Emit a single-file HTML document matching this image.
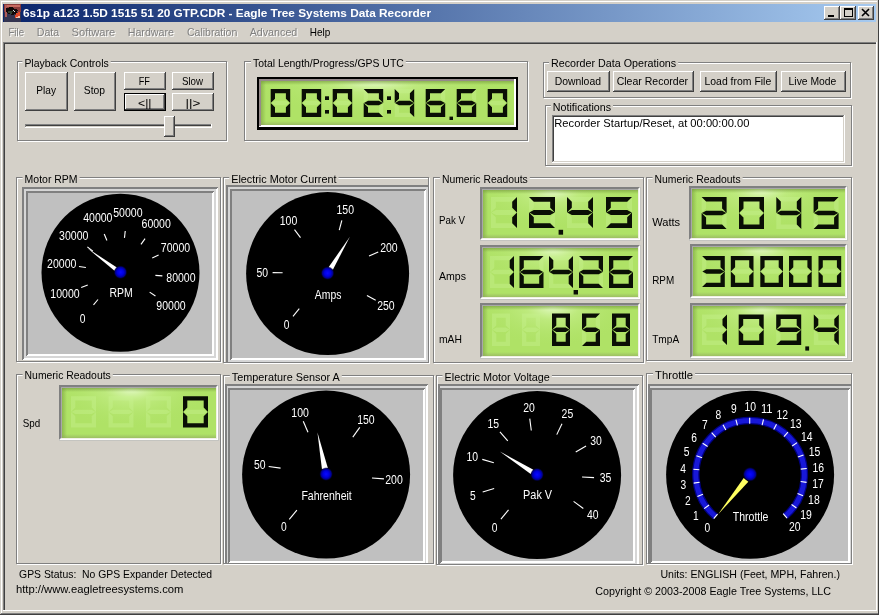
<!DOCTYPE html><html><head><meta charset="utf-8"><style>html,body{margin:0;padding:0;background:#d4d0c8;overflow:hidden}svg{display:block;will-change:transform}text{font-family:'Liberation Sans',sans-serif;white-space:pre}</style></head><body>
<svg width="879" height="615" viewBox="0 0 879 615" shape-rendering="crispEdges">
<defs><linearGradient id="title" x1="0" x2="1" y1="0" y2="0"><stop offset="0" stop-color="#0a246a"/><stop offset="1" stop-color="#a6caf0"/></linearGradient><linearGradient id="shT" x1="0" y1="0" x2="0" y2="1"><stop offset="0" stop-color="#7aa040" stop-opacity="0.7"/><stop offset="1" stop-color="#7aa040" stop-opacity="0"/></linearGradient><linearGradient id="shL" x1="0" y1="0" x2="1" y2="0"><stop offset="0" stop-color="#7aa040" stop-opacity="0.6"/><stop offset="1" stop-color="#7aa040" stop-opacity="0"/></linearGradient><linearGradient id="shB" x1="0" y1="1" x2="0" y2="0"><stop offset="0" stop-color="#90a860" stop-opacity="0.6"/><stop offset="1" stop-color="#90a860" stop-opacity="0"/></linearGradient><radialGradient id="dotglow"><stop offset="0" stop-color="#0a0aff"/><stop offset="0.45" stop-color="#0000e0"/><stop offset="0.75" stop-color="#000088"/><stop offset="1" stop-color="#000010" stop-opacity="0"/></radialGradient></defs>
<rect x="0" y="0" width="879" height="615" fill="#d4d0c8" />
<rect x="1" y="1" width="877" height="1" fill="#ffffff" />
<rect x="1" y="1" width="1" height="612" fill="#ffffff" />
<rect x="0" y="614" width="879" height="1" fill="#404040" />
<rect x="878" y="0" width="1" height="615" fill="#404040" />
<rect x="1" y="613" width="877" height="1" fill="#808080" />
<rect x="877" y="1" width="1" height="612" fill="#d4d0c8" />
<rect x="3" y="4" width="873" height="18" fill="url(#title)" />
<g shape-rendering="crispEdges">
<rect x="4" y="4" width="17" height="18" fill="#343450" />
<rect x="4" y="4" width="17" height="8" fill="#8a3a3a" />
<rect x="5" y="5" width="15" height="2" fill="#c86a60" />
<rect x="5" y="5" width="2" height="12" fill="#b05a58" />
</g>
<polygon points="6,8 12,7 15,9 18,10 17,13 13,15 8,14 6,11" fill="#120808"/>
<polygon points="8,11 13,11 12,14 8,13" fill="#304030"/>
<polygon points="13,10 15,11 14,12" fill="#e0e0e0"/>
<polygon points="16,13 20,12 20,17 15,18" fill="#e04828"/>
<polygon points="16,17 20,16 20,18 16,18" fill="#f0c0b0"/>
<text x="23" y="17" font-size="11" fill="#fff" font-weight="bold" text-anchor="start" textLength="408" lengthAdjust="spacingAndGlyphs" >6s1p a123 1.5D 1515 51 20 GTP.CDR - Eagle Tree Systems Data Recorder</text>
<rect x="824" y="6" width="16" height="14" fill="#404040" />
<rect x="824" y="6" width="15" height="13" fill="#ffffff" />
<rect x="825" y="7" width="14" height="12" fill="#808080" />
<rect x="825" y="7" width="13" height="11" fill="#d4d0c8" />
<rect x="840" y="6" width="16" height="14" fill="#404040" />
<rect x="840" y="6" width="15" height="13" fill="#ffffff" />
<rect x="841" y="7" width="14" height="12" fill="#808080" />
<rect x="841" y="7" width="13" height="11" fill="#d4d0c8" />
<rect x="858" y="6" width="16" height="14" fill="#404040" />
<rect x="858" y="6" width="15" height="13" fill="#ffffff" />
<rect x="859" y="7" width="14" height="12" fill="#808080" />
<rect x="859" y="7" width="13" height="11" fill="#d4d0c8" />
<rect x="828" y="15" width="6" height="2" fill="#000" />
<rect x="844" y="8" width="9" height="9" fill="#000" />
<rect x="845" y="10" width="7" height="6" fill="#d4d0c8" />
<path d="M862,9 L869,16 M869,9 L862,16" stroke="#000" stroke-width="1.6" shape-rendering="auto"/>
<g shape-rendering="auto">
<text x="9.5" y="37" font-size="11" fill="#fff" font-weight="normal" text-anchor="start" textLength="15.5" lengthAdjust="spacingAndGlyphs" >File</text>
<text x="8.5" y="36" font-size="11" fill="#808080" font-weight="normal" text-anchor="start" textLength="15.5" lengthAdjust="spacingAndGlyphs" >File</text>
<text x="37.8" y="37" font-size="11" fill="#fff" font-weight="normal" text-anchor="start" textLength="22.4" lengthAdjust="spacingAndGlyphs" >Data</text>
<text x="36.8" y="36" font-size="11" fill="#808080" font-weight="normal" text-anchor="start" textLength="22.4" lengthAdjust="spacingAndGlyphs" >Data</text>
<text x="72.6" y="37" font-size="11" fill="#fff" font-weight="normal" text-anchor="start" textLength="43.7" lengthAdjust="spacingAndGlyphs" >Software</text>
<text x="71.6" y="36" font-size="11" fill="#808080" font-weight="normal" text-anchor="start" textLength="43.7" lengthAdjust="spacingAndGlyphs" >Software</text>
<text x="128.7" y="37" font-size="11" fill="#fff" font-weight="normal" text-anchor="start" textLength="46.3" lengthAdjust="spacingAndGlyphs" >Hardware</text>
<text x="127.7" y="36" font-size="11" fill="#808080" font-weight="normal" text-anchor="start" textLength="46.3" lengthAdjust="spacingAndGlyphs" >Hardware</text>
<text x="188" y="37" font-size="11" fill="#fff" font-weight="normal" text-anchor="start" textLength="50.3" lengthAdjust="spacingAndGlyphs" >Calibration</text>
<text x="187" y="36" font-size="11" fill="#808080" font-weight="normal" text-anchor="start" textLength="50.3" lengthAdjust="spacingAndGlyphs" >Calibration</text>
<text x="250.7" y="37" font-size="11" fill="#fff" font-weight="normal" text-anchor="start" textLength="47.6" lengthAdjust="spacingAndGlyphs" >Advanced</text>
<text x="249.7" y="36" font-size="11" fill="#808080" font-weight="normal" text-anchor="start" textLength="47.6" lengthAdjust="spacingAndGlyphs" >Advanced</text>
<text x="309.7" y="36" font-size="11" fill="#000" font-weight="normal" text-anchor="start" textLength="20.5" lengthAdjust="spacingAndGlyphs" >Help</text>
</g>
<rect x="3" y="42" width="873" height="1" fill="#808080" />
<rect x="3" y="42" width="1" height="569" fill="#808080" />
<rect x="4" y="43" width="872" height="1" fill="#404040" />
<rect x="4" y="43" width="1" height="567" fill="#404040" />
<rect x="3" y="610" width="874" height="1" fill="#ffffff" />
<rect x="876" y="42" width="1" height="569" fill="#ffffff" />
<g shape-rendering="auto">
<rect x="18" y="62" width="210" height="1" fill="#ffffff" />
<rect x="18" y="62" width="1" height="80" fill="#ffffff" />
<rect x="227" y="62" width="1" height="80" fill="#ffffff" />
<rect x="18" y="141" width="210" height="1" fill="#ffffff" />
<rect x="17" y="61" width="210" height="1" fill="#808080" />
<rect x="17" y="61" width="1" height="80" fill="#808080" />
<rect x="226" y="61" width="1" height="80" fill="#808080" />
<rect x="17" y="140" width="210" height="1" fill="#808080" />
<rect x="22.4" y="57" width="88.3" height="7" fill="#d4d0c8" />
<text x="24.4" y="67" font-size="11" fill="#000" font-weight="normal" text-anchor="start" textLength="84.3" lengthAdjust="spacingAndGlyphs" >Playback Controls</text>
<g shape-rendering="crispEdges">
<rect x="25" y="72" width="43" height="39" fill="#404040" />
<rect x="25" y="72" width="42" height="38" fill="#ffffff" />
<rect x="26" y="73" width="41" height="37" fill="#808080" />
<rect x="26" y="73" width="40" height="36" fill="#d4d0c8" />
<rect x="74" y="72" width="42" height="39" fill="#404040" />
<rect x="74" y="72" width="41" height="38" fill="#ffffff" />
<rect x="75" y="73" width="40" height="37" fill="#808080" />
<rect x="75" y="73" width="39" height="36" fill="#d4d0c8" />
<rect x="124" y="72" width="42" height="18" fill="#404040" />
<rect x="124" y="72" width="41" height="17" fill="#ffffff" />
<rect x="125" y="73" width="40" height="16" fill="#808080" />
<rect x="125" y="73" width="39" height="15" fill="#d4d0c8" />
<rect x="172" y="72" width="42" height="18" fill="#404040" />
<rect x="172" y="72" width="41" height="17" fill="#ffffff" />
<rect x="173" y="73" width="40" height="16" fill="#808080" />
<rect x="173" y="73" width="39" height="15" fill="#d4d0c8" />
<rect x="124" y="93" width="42" height="18" fill="#000" />
<rect x="125" y="94" width="40" height="16" fill="#404040" />
<rect x="125" y="94" width="39" height="15" fill="#ffffff" />
<rect x="126" y="95" width="38" height="14" fill="#808080" />
<rect x="126" y="95" width="37" height="13" fill="#d4d0c8" />
<rect x="172" y="93" width="42" height="18" fill="#404040" />
<rect x="172" y="93" width="41" height="17" fill="#ffffff" />
<rect x="173" y="94" width="40" height="16" fill="#808080" />
<rect x="173" y="94" width="39" height="15" fill="#d4d0c8" />
<rect x="25" y="124" width="187" height="4" fill="#ffffff" />
<rect x="25" y="124" width="186" height="3" fill="#808080" />
<rect x="26" y="125" width="185" height="2" fill="#404040" />
<rect x="26" y="126" width="185" height="1" fill="#d4d0c8" />
<rect x="164" y="116" width="11" height="21" fill="#404040" />
<rect x="164" y="116" width="10" height="20" fill="#ffffff" />
<rect x="165" y="117" width="9" height="19" fill="#808080" />
<rect x="165" y="117" width="8" height="18" fill="#d4d0c8" />
</g>
<text x="36.25" y="94.4" font-size="11" fill="#000" font-weight="normal" text-anchor="start" textLength="19.75" lengthAdjust="spacingAndGlyphs" >Play</text>
<text x="83.75" y="94.4" font-size="11" fill="#000" font-weight="normal" text-anchor="start" textLength="21.25" lengthAdjust="spacingAndGlyphs" >Stop</text>
<text x="138.75" y="85" font-size="11" fill="#000" font-weight="normal" text-anchor="start" textLength="11.25" lengthAdjust="spacingAndGlyphs" >FF</text>
<text x="181.9" y="85" font-size="11" fill="#000" font-weight="normal" text-anchor="start" textLength="21.1" lengthAdjust="spacingAndGlyphs" >Slow</text>
<text x="138" y="107" font-size="11" fill="#000" font-weight="normal" text-anchor="start" textLength="13.5" lengthAdjust="spacingAndGlyphs" >&lt;||</text>
<text x="185.6" y="107" font-size="11" fill="#000" font-weight="normal" text-anchor="start" textLength="14.8" lengthAdjust="spacingAndGlyphs" >||&gt;</text>
<rect x="245" y="62" width="284" height="1" fill="#ffffff" />
<rect x="245" y="62" width="1" height="80" fill="#ffffff" />
<rect x="528" y="62" width="1" height="80" fill="#ffffff" />
<rect x="245" y="141" width="284" height="1" fill="#ffffff" />
<rect x="244" y="61" width="284" height="1" fill="#808080" />
<rect x="244" y="61" width="1" height="80" fill="#808080" />
<rect x="527" y="61" width="1" height="80" fill="#808080" />
<rect x="244" y="140" width="284" height="1" fill="#808080" />
<rect x="251" y="57" width="154.8" height="7" fill="#d4d0c8" />
<text x="253" y="67" font-size="11" fill="#000" font-weight="normal" text-anchor="start" textLength="150.8" lengthAdjust="spacingAndGlyphs" >Total Length/Progress/GPS UTC</text>
<g shape-rendering="crispEdges">
<rect x="257" y="77" width="261" height="53" fill="#000" />
<rect x="259" y="79" width="257" height="48" fill="#ffffff" />
<rect x="259" y="79" width="255" height="2" fill="#958a8a" />
<rect x="259" y="79" width="2" height="47" fill="#958a8a" />
<defs><radialGradient id="g1" cx="0.45" cy="0" r="0.5" fx="0.45" fy="0" gradientTransform="translate(0.45 0) scale(1 1.6) translate(-0.45 0)"><stop offset="0" stop-color="#f0ffe0" stop-opacity="0.85"/><stop offset="0.35" stop-color="#d8f8a8" stop-opacity="0.35"/><stop offset="1" stop-color="#b0e468" stop-opacity="0"/></radialGradient></defs>
<rect x="261" y="81" width="253" height="44" fill="#afe266" />
<rect x="261" y="81" width="253" height="44" fill="url(#g1)" />
<rect x="261" y="81" width="253" height="4" fill="url(#shT)" />
<rect x="261" y="81" width="5" height="44" fill="url(#shL)" />
<rect x="261" y="121" width="253" height="4" fill="url(#shB)" />
</g>
<path d="M271.00,103.00 L275.00,100.85 L285.90,100.85 L289.90,103.00 L285.90,105.15 L275.00,105.15Z" fill="#c8f290" fill-opacity="0.4"/>
<path d="M270.70,89.00 L290.20,89.00 L285.90,93.30 L275.00,93.30Z M270.70,117.00 L290.20,117.00 L285.90,112.70 L275.00,112.70Z M270.70,89.00 L275.00,93.30 L275.00,98.70 L270.70,103.00Z M270.70,117.00 L275.00,112.70 L275.00,107.30 L270.70,103.00Z M290.20,89.00 L285.90,93.30 L285.90,98.70 L290.20,103.00Z M290.20,117.00 L285.90,112.70 L285.90,107.30 L290.20,103.00Z" fill="#0a0f05"/>
<path d="M302.00,103.00 L306.00,100.85 L316.90,100.85 L320.90,103.00 L316.90,105.15 L306.00,105.15Z" fill="#c8f290" fill-opacity="0.4"/>
<path d="M301.70,89.00 L321.20,89.00 L316.90,93.30 L306.00,93.30Z M301.70,117.00 L321.20,117.00 L316.90,112.70 L306.00,112.70Z M301.70,89.00 L306.00,93.30 L306.00,98.70 L301.70,103.00Z M301.70,117.00 L306.00,112.70 L306.00,107.30 L301.70,103.00Z M321.20,89.00 L316.90,93.30 L316.90,98.70 L321.20,103.00Z M321.20,117.00 L316.90,112.70 L316.90,107.30 L321.20,103.00Z" fill="#0a0f05"/>
<path d="M333.00,103.00 L337.00,100.85 L347.90,100.85 L351.90,103.00 L347.90,105.15 L337.00,105.15Z" fill="#c8f290" fill-opacity="0.4"/>
<path d="M332.70,89.00 L352.20,89.00 L347.90,93.30 L337.00,93.30Z M332.70,117.00 L352.20,117.00 L347.90,112.70 L337.00,112.70Z M332.70,89.00 L337.00,93.30 L337.00,98.70 L332.70,103.00Z M332.70,117.00 L337.00,112.70 L337.00,107.30 L332.70,103.00Z M352.20,89.00 L347.90,93.30 L347.90,98.70 L352.20,103.00Z M352.20,117.00 L347.90,112.70 L347.90,107.30 L352.20,103.00Z" fill="#0a0f05"/>
<path d="M363.70,89.00 L368.00,93.30 L368.00,98.70 L363.70,103.00Z M383.20,117.00 L378.90,112.70 L378.90,107.30 L383.20,103.00Z" fill="#c8f290" fill-opacity="0.4"/>
<path d="M363.70,89.00 L383.20,89.00 L378.90,93.30 L368.00,93.30Z M363.70,117.00 L383.20,117.00 L378.90,112.70 L368.00,112.70Z M363.70,117.00 L368.00,112.70 L368.00,107.30 L363.70,103.00Z M383.20,89.00 L378.90,93.30 L378.90,98.70 L383.20,103.00Z M364.00,103.00 L368.00,100.85 L378.90,100.85 L382.90,103.00 L378.90,105.15 L368.00,105.15Z" fill="#0a0f05"/>
<path d="M394.70,89.00 L414.20,89.00 L409.90,93.30 L399.00,93.30Z M394.70,117.00 L414.20,117.00 L409.90,112.70 L399.00,112.70Z M394.70,117.00 L399.00,112.70 L399.00,107.30 L394.70,103.00Z" fill="#c8f290" fill-opacity="0.4"/>
<path d="M394.70,89.00 L399.00,93.30 L399.00,98.70 L394.70,103.00Z M414.20,89.00 L409.90,93.30 L409.90,98.70 L414.20,103.00Z M414.20,117.00 L409.90,112.70 L409.90,107.30 L414.20,103.00Z M395.00,103.00 L399.00,100.85 L409.90,100.85 L413.90,103.00 L409.90,105.15 L399.00,105.15Z" fill="#0a0f05"/>
<path d="M445.20,89.00 L440.90,93.30 L440.90,98.70 L445.20,103.00Z" fill="#c8f290" fill-opacity="0.4"/>
<path d="M425.70,89.00 L445.20,89.00 L440.90,93.30 L430.00,93.30Z M425.70,117.00 L445.20,117.00 L440.90,112.70 L430.00,112.70Z M425.70,89.00 L430.00,93.30 L430.00,98.70 L425.70,103.00Z M425.70,117.00 L430.00,112.70 L430.00,107.30 L425.70,103.00Z M445.20,117.00 L440.90,112.70 L440.90,107.30 L445.20,103.00Z M426.00,103.00 L430.00,100.85 L440.90,100.85 L444.90,103.00 L440.90,105.15 L430.00,105.15Z" fill="#0a0f05"/>
<path d="M476.20,89.00 L471.90,93.30 L471.90,98.70 L476.20,103.00Z" fill="#c8f290" fill-opacity="0.4"/>
<path d="M456.70,89.00 L476.20,89.00 L471.90,93.30 L461.00,93.30Z M456.70,117.00 L476.20,117.00 L471.90,112.70 L461.00,112.70Z M456.70,89.00 L461.00,93.30 L461.00,98.70 L456.70,103.00Z M456.70,117.00 L461.00,112.70 L461.00,107.30 L456.70,103.00Z M476.20,117.00 L471.90,112.70 L471.90,107.30 L476.20,103.00Z M457.00,103.00 L461.00,100.85 L471.90,100.85 L475.90,103.00 L471.90,105.15 L461.00,105.15Z" fill="#0a0f05"/>
<path d="M488.00,103.00 L492.00,100.85 L502.90,100.85 L506.90,103.00 L502.90,105.15 L492.00,105.15Z" fill="#c8f290" fill-opacity="0.4"/>
<path d="M487.70,89.00 L507.20,89.00 L502.90,93.30 L492.00,93.30Z M487.70,117.00 L507.20,117.00 L502.90,112.70 L492.00,112.70Z M487.70,89.00 L492.00,93.30 L492.00,98.70 L487.70,103.00Z M487.70,117.00 L492.00,112.70 L492.00,107.30 L487.70,103.00Z M507.20,89.00 L502.90,93.30 L502.90,98.70 L507.20,103.00Z M507.20,117.00 L502.90,112.70 L502.90,107.30 L507.20,103.00Z" fill="#0a0f05"/>
<rect x="325" y="96.3" width="4" height="3.7" fill="#0a0f05" />
<rect x="325" y="110" width="4" height="3.6" fill="#0a0f05" />
<rect x="387" y="96.3" width="4" height="3.7" fill="#0a0f05" />
<rect x="387" y="110" width="4" height="3.6" fill="#0a0f05" />
<rect x="449.5" y="116.6" width="3.5" height="3.4" fill="#0a0f05" />
<rect x="544" y="63" width="308" height="1" fill="#ffffff" />
<rect x="544" y="63" width="1" height="36" fill="#ffffff" />
<rect x="851" y="63" width="1" height="36" fill="#ffffff" />
<rect x="544" y="98" width="308" height="1" fill="#ffffff" />
<rect x="543" y="62" width="308" height="1" fill="#808080" />
<rect x="543" y="62" width="1" height="36" fill="#808080" />
<rect x="850" y="62" width="1" height="36" fill="#808080" />
<rect x="543" y="97" width="308" height="1" fill="#808080" />
<rect x="549" y="58" width="129.2" height="7" fill="#d4d0c8" />
<text x="551" y="66.6" font-size="11" fill="#000" font-weight="normal" text-anchor="start" textLength="125.2" lengthAdjust="spacingAndGlyphs" >Recorder Data Operations</text>
<g shape-rendering="crispEdges">
<rect x="547" y="71" width="63" height="21" fill="#404040" />
<rect x="547" y="71" width="62" height="20" fill="#ffffff" />
<rect x="548" y="72" width="61" height="19" fill="#808080" />
<rect x="548" y="72" width="60" height="18" fill="#d4d0c8" />
<rect x="613" y="71" width="81" height="21" fill="#404040" />
<rect x="613" y="71" width="80" height="20" fill="#ffffff" />
<rect x="614" y="72" width="79" height="19" fill="#808080" />
<rect x="614" y="72" width="78" height="18" fill="#d4d0c8" />
<rect x="700" y="71" width="77" height="21" fill="#404040" />
<rect x="700" y="71" width="76" height="20" fill="#ffffff" />
<rect x="701" y="72" width="75" height="19" fill="#808080" />
<rect x="701" y="72" width="74" height="18" fill="#d4d0c8" />
<rect x="781" y="71" width="65" height="21" fill="#404040" />
<rect x="781" y="71" width="64" height="20" fill="#ffffff" />
<rect x="782" y="72" width="63" height="19" fill="#808080" />
<rect x="782" y="72" width="62" height="18" fill="#d4d0c8" />
</g>
<text x="554.7" y="85" font-size="11" fill="#000" font-weight="normal" text-anchor="start" textLength="46.3" lengthAdjust="spacingAndGlyphs" >Download</text>
<text x="616.7" y="85" font-size="11" fill="#000" font-weight="normal" text-anchor="start" textLength="71.3" lengthAdjust="spacingAndGlyphs" >Clear Recorder</text>
<text x="704.5" y="85" font-size="11" fill="#000" font-weight="normal" text-anchor="start" textLength="66.7" lengthAdjust="spacingAndGlyphs" >Load from File</text>
<text x="788.6" y="85" font-size="11" fill="#000" font-weight="normal" text-anchor="start" textLength="47.8" lengthAdjust="spacingAndGlyphs" >Live Mode</text>
<rect x="546" y="106" width="307" height="1" fill="#ffffff" />
<rect x="546" y="106" width="1" height="61" fill="#ffffff" />
<rect x="852" y="106" width="1" height="61" fill="#ffffff" />
<rect x="546" y="166" width="307" height="1" fill="#ffffff" />
<rect x="545" y="105" width="307" height="1" fill="#808080" />
<rect x="545" y="105" width="1" height="61" fill="#808080" />
<rect x="851" y="105" width="1" height="61" fill="#808080" />
<rect x="545" y="165" width="307" height="1" fill="#808080" />
<rect x="550.8" y="101" width="62.2" height="7" fill="#d4d0c8" />
<text x="552.8" y="110.6" font-size="11" fill="#000" font-weight="normal" text-anchor="start" textLength="58.2" lengthAdjust="spacingAndGlyphs" >Notifications</text>
<g shape-rendering="crispEdges">
<rect x="552" y="115" width="293" height="48" fill="#ffffff" />
<rect x="552" y="115" width="292" height="47" fill="#808080" />
<rect x="553" y="116" width="291" height="46" fill="#d4d0c8" />
<rect x="553" y="116" width="290" height="45" fill="#404040" />
<rect x="554" y="117" width="289" height="44" fill="#ffffff" />
</g>
<text x="554.3" y="126.5" font-size="11" fill="#000" font-weight="normal" text-anchor="start" textLength="195.1" lengthAdjust="spacingAndGlyphs" >Recorder Startup/Reset, at 00:00:00.00</text>
<rect x="17" y="178" width="205" height="1" fill="#ffffff" />
<rect x="17" y="178" width="1" height="185" fill="#ffffff" />
<rect x="221" y="178" width="1" height="185" fill="#ffffff" />
<rect x="17" y="362" width="205" height="1" fill="#ffffff" />
<rect x="16" y="177" width="205" height="1" fill="#808080" />
<rect x="16" y="177" width="1" height="185" fill="#808080" />
<rect x="220" y="177" width="1" height="185" fill="#808080" />
<rect x="16" y="361" width="205" height="1" fill="#808080" />
<rect x="22.6" y="173" width="57" height="7" fill="#d4d0c8" />
<text x="24.6" y="182.7" font-size="11" fill="#000" font-weight="normal" text-anchor="start" textLength="53" lengthAdjust="spacingAndGlyphs" >Motor RPM</text>
<rect x="224" y="178" width="206" height="1" fill="#ffffff" />
<rect x="224" y="178" width="1" height="186" fill="#ffffff" />
<rect x="429" y="178" width="1" height="186" fill="#ffffff" />
<rect x="224" y="363" width="206" height="1" fill="#ffffff" />
<rect x="223" y="177" width="206" height="1" fill="#808080" />
<rect x="223" y="177" width="1" height="186" fill="#808080" />
<rect x="428" y="177" width="1" height="186" fill="#808080" />
<rect x="223" y="362" width="206" height="1" fill="#808080" />
<rect x="229.2" y="173" width="109.3" height="7" fill="#d4d0c8" />
<text x="231.2" y="182.7" font-size="11" fill="#000" font-weight="normal" text-anchor="start" textLength="105.3" lengthAdjust="spacingAndGlyphs" >Electric Motor Current</text>
<rect x="434" y="178" width="211" height="1" fill="#ffffff" />
<rect x="434" y="178" width="1" height="186" fill="#ffffff" />
<rect x="644" y="178" width="1" height="186" fill="#ffffff" />
<rect x="434" y="363" width="211" height="1" fill="#ffffff" />
<rect x="433" y="177" width="211" height="1" fill="#808080" />
<rect x="433" y="177" width="1" height="186" fill="#808080" />
<rect x="643" y="177" width="1" height="186" fill="#808080" />
<rect x="433" y="362" width="211" height="1" fill="#808080" />
<rect x="439.9" y="173" width="89.9" height="7" fill="#d4d0c8" />
<text x="441.9" y="182.7" font-size="11" fill="#000" font-weight="normal" text-anchor="start" textLength="85.9" lengthAdjust="spacingAndGlyphs" >Numeric Readouts</text>
<rect x="647" y="178" width="206" height="1" fill="#ffffff" />
<rect x="647" y="178" width="1" height="184" fill="#ffffff" />
<rect x="852" y="178" width="1" height="184" fill="#ffffff" />
<rect x="647" y="361" width="206" height="1" fill="#ffffff" />
<rect x="646" y="177" width="206" height="1" fill="#808080" />
<rect x="646" y="177" width="1" height="184" fill="#808080" />
<rect x="851" y="177" width="1" height="184" fill="#808080" />
<rect x="646" y="360" width="206" height="1" fill="#808080" />
<rect x="652.6" y="173" width="90" height="7" fill="#d4d0c8" />
<text x="654.6" y="182.7" font-size="11" fill="#000" font-weight="normal" text-anchor="start" textLength="86" lengthAdjust="spacingAndGlyphs" >Numeric Readouts</text>
<rect x="17" y="375" width="205" height="1" fill="#ffffff" />
<rect x="17" y="375" width="1" height="190" fill="#ffffff" />
<rect x="221" y="375" width="1" height="190" fill="#ffffff" />
<rect x="17" y="564" width="205" height="1" fill="#ffffff" />
<rect x="16" y="374" width="205" height="1" fill="#808080" />
<rect x="16" y="374" width="1" height="190" fill="#808080" />
<rect x="220" y="374" width="1" height="190" fill="#808080" />
<rect x="16" y="563" width="205" height="1" fill="#808080" />
<rect x="22.6" y="370" width="90.2" height="7" fill="#d4d0c8" />
<text x="24.6" y="378.8" font-size="11" fill="#000" font-weight="normal" text-anchor="start" textLength="86.2" lengthAdjust="spacingAndGlyphs" >Numeric Readouts</text>
<rect x="224" y="376" width="211" height="1" fill="#ffffff" />
<rect x="224" y="376" width="1" height="189" fill="#ffffff" />
<rect x="434" y="376" width="1" height="189" fill="#ffffff" />
<rect x="224" y="564" width="211" height="1" fill="#ffffff" />
<rect x="223" y="375" width="211" height="1" fill="#808080" />
<rect x="223" y="375" width="1" height="189" fill="#808080" />
<rect x="433" y="375" width="1" height="189" fill="#808080" />
<rect x="223" y="563" width="211" height="1" fill="#808080" />
<rect x="229.8" y="371" width="112" height="7" fill="#d4d0c8" />
<text x="231.8" y="380.7" font-size="11" fill="#000" font-weight="normal" text-anchor="start" textLength="108" lengthAdjust="spacingAndGlyphs" >Temperature Sensor A</text>
<rect x="437" y="376" width="207" height="1" fill="#ffffff" />
<rect x="437" y="376" width="1" height="190" fill="#ffffff" />
<rect x="643" y="376" width="1" height="190" fill="#ffffff" />
<rect x="437" y="565" width="207" height="1" fill="#ffffff" />
<rect x="436" y="375" width="207" height="1" fill="#808080" />
<rect x="436" y="375" width="1" height="190" fill="#808080" />
<rect x="642" y="375" width="1" height="190" fill="#808080" />
<rect x="436" y="564" width="207" height="1" fill="#808080" />
<rect x="442.5" y="371" width="109.4" height="7" fill="#d4d0c8" />
<text x="444.5" y="380.7" font-size="11" fill="#000" font-weight="normal" text-anchor="start" textLength="105.4" lengthAdjust="spacingAndGlyphs" >Electric Motor Voltage</text>
<rect x="647" y="374" width="206" height="1" fill="#ffffff" />
<rect x="647" y="374" width="1" height="191" fill="#ffffff" />
<rect x="852" y="374" width="1" height="191" fill="#ffffff" />
<rect x="647" y="564" width="206" height="1" fill="#ffffff" />
<rect x="646" y="373" width="206" height="1" fill="#808080" />
<rect x="646" y="373" width="1" height="191" fill="#808080" />
<rect x="851" y="373" width="1" height="191" fill="#808080" />
<rect x="646" y="563" width="206" height="1" fill="#808080" />
<rect x="653.1" y="369" width="42" height="7" fill="#d4d0c8" />
<text x="655.1" y="378.9" font-size="11" fill="#000" font-weight="normal" text-anchor="start" textLength="38" lengthAdjust="spacingAndGlyphs" >Throttle</text>
<g shape-rendering="crispEdges">
<clipPath id="cf1"><rect x="17" y="178" width="203" height="183"/></clipPath>
<g clip-path="url(#cf1)">
<rect x="22" y="187" width="196" height="173" fill="#ffffff" />
<polygon points="22,187 218,187 216,189 24,189 24,358 22,360" fill="#808080"/>
<rect x="24" y="189" width="192" height="169" fill="#d6d6d6" />
<rect x="26" y="191" width="188" height="165" fill="#ffffff" />
<polygon points="26,191 214,191 212,193 28,193 28,354 26,356" fill="#808080"/>
<rect x="28" y="193" width="184" height="161" fill="#c0c0c0" />
</g>
<clipPath id="cf2"><rect x="224" y="178" width="204" height="184"/></clipPath>
<g clip-path="url(#cf2)">
<rect x="226" y="185" width="204" height="179" fill="#ffffff" />
<polygon points="226,185 430,185 428,187 228,187 228,362 226,364" fill="#808080"/>
<rect x="228" y="187" width="200" height="175" fill="#d6d6d6" />
<rect x="230" y="189" width="196" height="171" fill="#ffffff" />
<polygon points="230,189 426,189 424,191 232,191 232,358 230,360" fill="#808080"/>
<rect x="232" y="191" width="192" height="167" fill="#c0c0c0" />
</g>
<clipPath id="cf3"><rect x="224" y="376" width="209" height="187"/></clipPath>
<g clip-path="url(#cf3)">
<rect x="225" y="384" width="203" height="183" fill="#ffffff" />
<polygon points="225,384 428,384 426,386 227,386 227,565 225,567" fill="#808080"/>
<rect x="227" y="386" width="199" height="179" fill="#d6d6d6" />
<rect x="228" y="388" width="197" height="175" fill="#ffffff" />
<polygon points="228,388 425,388 423,390 230,390 230,561 228,563" fill="#808080"/>
<rect x="230" y="390" width="193" height="171" fill="#c0c0c0" />
</g>
<clipPath id="cf4"><rect x="437" y="376" width="205" height="188"/></clipPath>
<g clip-path="url(#cf4)">
<rect x="438" y="384" width="201" height="183" fill="#ffffff" />
<polygon points="438,384 639,384 637,386 440,386 440,565 438,567" fill="#808080"/>
<rect x="440" y="386" width="197" height="179" fill="#d6d6d6" />
<rect x="440" y="388" width="195" height="175" fill="#ffffff" />
<polygon points="440,388 635,388 633,390 442,390 442,561 440,563" fill="#808080"/>
<rect x="442" y="390" width="191" height="171" fill="#c0c0c0" />
</g>
<clipPath id="cf5"><rect x="647" y="374" width="204" height="189"/></clipPath>
<g clip-path="url(#cf5)">
<rect x="648" y="384" width="206" height="183" fill="#ffffff" />
<polygon points="648,384 854,384 852,386 650,386 650,565 648,567" fill="#808080"/>
<rect x="650" y="386" width="202" height="179" fill="#d6d6d6" />
<rect x="650" y="388" width="200" height="175" fill="#ffffff" />
<polygon points="650,388 850,388 848,390 652,390 652,561 650,563" fill="#808080"/>
<rect x="652" y="390" width="196" height="171" fill="#c0c0c0" />
</g>
</g>
<circle cx="120.5" cy="272.7" r="79" fill="#000"/>
<line x1="98.00" y1="299.51" x2="93.50" y2="304.87" stroke="#fff" stroke-width="1.1"/>
<line x1="87.76" y1="285.07" x2="81.21" y2="287.55" stroke="#fff" stroke-width="1.1"/>
<line x1="85.89" y1="267.47" x2="78.97" y2="266.42" stroke="#fff" stroke-width="1.1"/>
<line x1="92.88" y1="251.20" x2="87.36" y2="246.90" stroke="#fff" stroke-width="1.1"/>
<line x1="106.94" y1="240.43" x2="104.22" y2="233.98" stroke="#fff" stroke-width="1.1"/>
<line x1="124.46" y1="237.92" x2="125.25" y2="230.97" stroke="#fff" stroke-width="1.1"/>
<line x1="140.97" y1="244.31" x2="145.07" y2="238.64" stroke="#fff" stroke-width="1.1"/>
<line x1="152.25" y1="257.96" x2="158.60" y2="255.02" stroke="#fff" stroke-width="1.1"/>
<line x1="155.40" y1="275.39" x2="162.38" y2="275.92" stroke="#fff" stroke-width="1.1"/>
<line x1="149.62" y1="292.12" x2="155.44" y2="296.00" stroke="#fff" stroke-width="1.1"/>
<text x="79.68" y="323.06" font-size="12" fill="#fff" textLength="5.70" lengthAdjust="spacingAndGlyphs">0</text>
<text x="50.32" y="298.31" font-size="12" fill="#fff" textLength="29.30" lengthAdjust="spacingAndGlyphs">10000</text>
<text x="47.12" y="268.13" font-size="12" fill="#fff" textLength="29.30" lengthAdjust="spacingAndGlyphs">20000</text>
<text x="59.10" y="240.24" font-size="12" fill="#fff" textLength="29.30" lengthAdjust="spacingAndGlyphs">30000</text>
<text x="83.20" y="221.79" font-size="12" fill="#fff" textLength="29.30" lengthAdjust="spacingAndGlyphs">40000</text>
<text x="113.24" y="217.49" font-size="12" fill="#fff" textLength="29.30" lengthAdjust="spacingAndGlyphs">50000</text>
<text x="141.55" y="228.44" font-size="12" fill="#fff" textLength="29.30" lengthAdjust="spacingAndGlyphs">60000</text>
<text x="160.87" y="251.84" font-size="12" fill="#fff" textLength="29.30" lengthAdjust="spacingAndGlyphs">70000</text>
<text x="166.27" y="281.70" font-size="12" fill="#fff" textLength="29.30" lengthAdjust="spacingAndGlyphs">80000</text>
<text x="156.37" y="310.39" font-size="12" fill="#fff" textLength="29.30" lengthAdjust="spacingAndGlyphs">90000</text>
<text x="109.40" y="296.7" font-size="12" fill="#fff" textLength="23.2" lengthAdjust="spacingAndGlyphs">RPM</text>
<polygon points="114.49,270.74 87.54,248.31 116.87,267.52" fill="#fff"/>
<circle cx="120.5" cy="272.2" r="7.0" fill="url(#dotglow)"/>
<circle cx="327.6" cy="273.6" r="81.5" fill="#000"/>
<line x1="299.28" y1="308.57" x2="292.99" y2="316.34" stroke="#fff" stroke-width="1.1"/>
<line x1="282.61" y1="272.81" x2="272.61" y2="272.64" stroke="#fff" stroke-width="1.1"/>
<line x1="300.52" y1="237.66" x2="294.50" y2="229.68" stroke="#fff" stroke-width="1.1"/>
<line x1="339.25" y1="230.13" x2="341.84" y2="220.47" stroke="#fff" stroke-width="1.1"/>
<line x1="369.02" y1="256.02" x2="378.23" y2="252.11" stroke="#fff" stroke-width="1.1"/>
<line x1="366.96" y1="295.42" x2="375.70" y2="300.26" stroke="#fff" stroke-width="1.1"/>
<text x="283.81" y="329.29" font-size="12" fill="#fff" textLength="5.70" lengthAdjust="spacingAndGlyphs">0</text>
<text x="256.41" y="276.85" font-size="12" fill="#fff" textLength="11.60" lengthAdjust="spacingAndGlyphs">50</text>
<text x="279.73" y="225.29" font-size="12" fill="#fff" textLength="17.50" lengthAdjust="spacingAndGlyphs">100</text>
<text x="336.53" y="214.25" font-size="12" fill="#fff" textLength="17.50" lengthAdjust="spacingAndGlyphs">150</text>
<text x="380.20" y="252.21" font-size="12" fill="#fff" textLength="17.50" lengthAdjust="spacingAndGlyphs">200</text>
<text x="377.17" y="310.00" font-size="12" fill="#fff" textLength="17.50" lengthAdjust="spacingAndGlyphs">250</text>
<text x="314.85" y="298.6" font-size="12" fill="#fff" textLength="26.5" lengthAdjust="spacingAndGlyphs">Amps</text>
<polygon points="328.57,267.17 349.88,236.82 332.85,269.76" fill="#fff"/>
<circle cx="327.6" cy="273.1" r="7.0" fill="url(#dotglow)"/>
<circle cx="326.1" cy="474.6" r="84" fill="#000"/>
<line x1="296.90" y1="510.15" x2="289.29" y2="519.42" stroke="#fff" stroke-width="1.1"/>
<line x1="280.56" y1="468.12" x2="268.68" y2="466.43" stroke="#fff" stroke-width="1.1"/>
<line x1="307.98" y1="432.32" x2="303.25" y2="421.29" stroke="#fff" stroke-width="1.1"/>
<line x1="352.81" y1="437.15" x2="359.78" y2="427.38" stroke="#fff" stroke-width="1.1"/>
<line x1="371.98" y1="477.97" x2="383.94" y2="478.85" stroke="#fff" stroke-width="1.1"/>
<text x="281.01" y="531.16" font-size="12" fill="#fff" textLength="5.70" lengthAdjust="spacingAndGlyphs">0</text>
<text x="254.07" y="469.49" font-size="12" fill="#fff" textLength="11.60" lengthAdjust="spacingAndGlyphs">50</text>
<text x="291.36" y="416.96" font-size="12" fill="#fff" textLength="17.50" lengthAdjust="spacingAndGlyphs">100</text>
<text x="357.15" y="424.05" font-size="12" fill="#fff" textLength="17.50" lengthAdjust="spacingAndGlyphs">150</text>
<text x="385.27" y="483.94" font-size="12" fill="#fff" textLength="17.50" lengthAdjust="spacingAndGlyphs">200</text>
<text x="301.40" y="499.6" font-size="12" fill="#fff" textLength="50.4" lengthAdjust="spacingAndGlyphs">Fahrenheit</text>
<polygon points="321.95,469.33 317.45,432.48 327.83,468.12" fill="#fff"/>
<circle cx="326.1" cy="474.1" r="7.0" fill="url(#dotglow)"/>
<circle cx="537.1" cy="475.1" r="84" fill="#000"/>
<line x1="508.54" y1="509.87" x2="500.92" y2="519.15" stroke="#fff" stroke-width="1.1"/>
<line x1="494.14" y1="488.48" x2="482.68" y2="492.05" stroke="#fff" stroke-width="1.1"/>
<line x1="493.84" y1="462.70" x2="482.31" y2="459.39" stroke="#fff" stroke-width="1.1"/>
<line x1="507.76" y1="440.98" x2="499.93" y2="431.89" stroke="#fff" stroke-width="1.1"/>
<line x1="531.30" y1="430.47" x2="529.76" y2="418.57" stroke="#fff" stroke-width="1.1"/>
<line x1="556.76" y1="434.62" x2="562.00" y2="423.83" stroke="#fff" stroke-width="1.1"/>
<line x1="575.75" y1="452.06" x2="586.06" y2="445.91" stroke="#fff" stroke-width="1.1"/>
<line x1="582.06" y1="477.06" x2="594.05" y2="477.59" stroke="#fff" stroke-width="1.1"/>
<line x1="573.60" y1="501.42" x2="583.33" y2="508.44" stroke="#fff" stroke-width="1.1"/>
<text x="491.69" y="532.05" font-size="12" fill="#fff" textLength="5.70" lengthAdjust="spacingAndGlyphs">0</text>
<text x="469.93" y="499.72" font-size="12" fill="#fff" textLength="5.70" lengthAdjust="spacingAndGlyphs">5</text>
<text x="466.53" y="460.76" font-size="12" fill="#fff" textLength="11.60" lengthAdjust="spacingAndGlyphs">10</text>
<text x="487.56" y="427.95" font-size="12" fill="#fff" textLength="11.60" lengthAdjust="spacingAndGlyphs">15</text>
<text x="523.14" y="412.07" font-size="12" fill="#fff" textLength="11.60" lengthAdjust="spacingAndGlyphs">20</text>
<text x="561.60" y="418.33" font-size="12" fill="#fff" textLength="11.60" lengthAdjust="spacingAndGlyphs">25</text>
<text x="590.31" y="444.68" font-size="12" fill="#fff" textLength="11.60" lengthAdjust="spacingAndGlyphs">30</text>
<text x="599.84" y="482.47" font-size="12" fill="#fff" textLength="11.60" lengthAdjust="spacingAndGlyphs">35</text>
<text x="587.05" y="519.28" font-size="12" fill="#fff" textLength="11.60" lengthAdjust="spacingAndGlyphs">40</text>
<text x="523.10" y="499.1" font-size="12" fill="#fff" textLength="29" lengthAdjust="spacingAndGlyphs">Pak V</text>
<polygon points="530.69,474.01 499.91,451.59 533.36,469.78" fill="#fff"/>
<circle cx="537.1" cy="474.6" r="7.0" fill="url(#dotglow)"/>
<circle cx="750.1" cy="474.8" r="84" fill="#000"/>
<path d="M715.52,516.60 A54.25,54.25 0 1 1 785.26,516.11" stroke="#000080" stroke-width="7.5" fill="none"/>
<path d="M715.52,516.60 A54.25,54.25 0 1 1 785.26,516.11" stroke="#1818d8" stroke-width="5.0" fill="none"/>
<line x1="717.59" y1="514.10" x2="713.77" y2="518.72" stroke="#fff" stroke-width="1.1"/>
<line x1="709.05" y1="505.06" x2="704.22" y2="508.62" stroke="#fff" stroke-width="1.1"/>
<line x1="702.95" y1="494.23" x2="697.40" y2="496.52" stroke="#fff" stroke-width="1.1"/>
<line x1="699.65" y1="482.25" x2="693.71" y2="483.13" stroke="#fff" stroke-width="1.1"/>
<line x1="699.34" y1="469.82" x2="693.37" y2="469.24" stroke="#fff" stroke-width="1.1"/>
<line x1="702.06" y1="457.69" x2="696.40" y2="455.68" stroke="#fff" stroke-width="1.1"/>
<line x1="707.62" y1="446.58" x2="702.62" y2="443.26" stroke="#fff" stroke-width="1.1"/>
<line x1="715.71" y1="437.14" x2="711.66" y2="432.71" stroke="#fff" stroke-width="1.1"/>
<line x1="725.84" y1="429.94" x2="722.99" y2="424.66" stroke="#fff" stroke-width="1.1"/>
<line x1="737.42" y1="425.40" x2="735.92" y2="419.59" stroke="#fff" stroke-width="1.1"/>
<line x1="749.74" y1="423.80" x2="749.70" y2="417.80" stroke="#fff" stroke-width="1.1"/>
<line x1="762.09" y1="425.23" x2="763.50" y2="419.40" stroke="#fff" stroke-width="1.1"/>
<line x1="773.73" y1="429.60" x2="776.51" y2="424.29" stroke="#fff" stroke-width="1.1"/>
<line x1="783.96" y1="436.66" x2="787.94" y2="432.18" stroke="#fff" stroke-width="1.1"/>
<line x1="792.18" y1="445.99" x2="797.13" y2="442.60" stroke="#fff" stroke-width="1.1"/>
<line x1="797.90" y1="457.02" x2="803.53" y2="454.93" stroke="#fff" stroke-width="1.1"/>
<line x1="800.78" y1="469.12" x2="806.74" y2="468.45" stroke="#fff" stroke-width="1.1"/>
<line x1="800.65" y1="481.55" x2="806.60" y2="482.34" stroke="#fff" stroke-width="1.1"/>
<line x1="797.52" y1="493.57" x2="803.10" y2="495.78" stroke="#fff" stroke-width="1.1"/>
<line x1="791.57" y1="504.49" x2="796.45" y2="507.98" stroke="#fff" stroke-width="1.1"/>
<line x1="783.15" y1="513.64" x2="787.04" y2="518.21" stroke="#fff" stroke-width="1.1"/>
<text x="704.51" y="531.59" font-size="12" fill="#fff" textLength="5.70" lengthAdjust="spacingAndGlyphs">0</text>
<text x="693.12" y="519.55" font-size="12" fill="#fff" textLength="5.70" lengthAdjust="spacingAndGlyphs">1</text>
<text x="684.98" y="505.11" font-size="12" fill="#fff" textLength="5.70" lengthAdjust="spacingAndGlyphs">2</text>
<text x="680.58" y="489.13" font-size="12" fill="#fff" textLength="5.70" lengthAdjust="spacingAndGlyphs">3</text>
<text x="680.17" y="472.56" font-size="12" fill="#fff" textLength="5.70" lengthAdjust="spacingAndGlyphs">4</text>
<text x="683.79" y="456.39" font-size="12" fill="#fff" textLength="5.70" lengthAdjust="spacingAndGlyphs">5</text>
<text x="691.21" y="441.57" font-size="12" fill="#fff" textLength="5.70" lengthAdjust="spacingAndGlyphs">6</text>
<text x="702.00" y="428.99" font-size="12" fill="#fff" textLength="5.70" lengthAdjust="spacingAndGlyphs">7</text>
<text x="715.51" y="419.38" font-size="12" fill="#fff" textLength="5.70" lengthAdjust="spacingAndGlyphs">8</text>
<text x="730.94" y="413.34" font-size="12" fill="#fff" textLength="5.70" lengthAdjust="spacingAndGlyphs">9</text>
<text x="744.43" y="411.20" font-size="12" fill="#fff" textLength="11.60" lengthAdjust="spacingAndGlyphs">10</text>
<text x="760.89" y="413.11" font-size="12" fill="#fff" textLength="11.60" lengthAdjust="spacingAndGlyphs">11</text>
<text x="776.40" y="418.94" font-size="12" fill="#fff" textLength="11.60" lengthAdjust="spacingAndGlyphs">12</text>
<text x="790.05" y="428.35" font-size="12" fill="#fff" textLength="11.60" lengthAdjust="spacingAndGlyphs">13</text>
<text x="801.01" y="440.78" font-size="12" fill="#fff" textLength="11.60" lengthAdjust="spacingAndGlyphs">14</text>
<text x="808.64" y="455.50" font-size="12" fill="#fff" textLength="11.60" lengthAdjust="spacingAndGlyphs">15</text>
<text x="812.48" y="471.62" font-size="12" fill="#fff" textLength="11.60" lengthAdjust="spacingAndGlyphs">16</text>
<text x="812.30" y="488.19" font-size="12" fill="#fff" textLength="11.60" lengthAdjust="spacingAndGlyphs">17</text>
<text x="808.12" y="504.23" font-size="12" fill="#fff" textLength="11.60" lengthAdjust="spacingAndGlyphs">18</text>
<text x="800.19" y="518.78" font-size="12" fill="#fff" textLength="11.60" lengthAdjust="spacingAndGlyphs">19</text>
<text x="788.97" y="530.98" font-size="12" fill="#fff" textLength="11.60" lengthAdjust="spacingAndGlyphs">20</text>
<text x="732.75" y="520.8" font-size="12" fill="#fff" textLength="35.7" lengthAdjust="spacingAndGlyphs">Throttle</text>
<polygon points="748.34,481.74 718.00,514.43 743.68,477.96" fill="#ffff60"/>
<circle cx="750.1" cy="474.3" r="7.5" fill="url(#dotglow)"/>
<rect x="480" y="187" width="161" height="54" fill="#c4c4c0" />
<rect x="480" y="187" width="160" height="53" fill="#ffffff" />
<polygon points="480,187 640,187 638,189 482,189 482,238 480,240" fill="#808080"/>
<rect x="482" y="189" width="157" height="50" fill="#f0f0e4" />
<rect x="482" y="189" width="156" height="1" fill="#a8a8a8" />
<rect x="482" y="189" width="1" height="49" fill="#a8a8a8" />
<defs><radialGradient id="g2" cx="0.45" cy="0" r="0.5" fx="0.45" fy="0" gradientTransform="translate(0.45 0) scale(1 1.6) translate(-0.45 0)"><stop offset="0" stop-color="#f0ffe0" stop-opacity="0.85"/><stop offset="0.35" stop-color="#d8f8a8" stop-opacity="0.35"/><stop offset="1" stop-color="#b0e468" stop-opacity="0"/></radialGradient></defs>
<rect x="483" y="190" width="155" height="48" fill="#afe266" />
<rect x="483" y="190" width="155" height="48" fill="url(#g2)" />
<rect x="483" y="190" width="155" height="4" fill="url(#shT)" />
<rect x="483" y="190" width="5" height="48" fill="url(#shL)" />
<rect x="483" y="234" width="155" height="4" fill="url(#shB)" />
<text x="439" y="224" font-size="11" fill="#000" font-weight="normal" text-anchor="start" textLength="26" lengthAdjust="spacingAndGlyphs" >Pak V</text>
<path d="M491.00,197.00 L517.00,197.00 L512.20,201.80 L495.80,201.80Z M491.00,228.00 L517.00,228.00 L512.20,223.20 L495.80,223.20Z M491.00,197.00 L495.80,201.80 L495.80,207.70 L491.00,212.50Z M491.00,228.00 L495.80,223.20 L495.80,217.30 L491.00,212.50Z M491.30,212.50 L495.80,210.10 L512.20,210.10 L516.70,212.50 L512.20,214.90 L495.80,214.90Z" fill="#c8f290" fill-opacity="0.4"/>
<path d="M517.00,197.00 L512.20,201.80 L512.20,207.70 L517.00,212.50Z M517.00,228.00 L512.20,223.20 L512.20,217.30 L517.00,212.50Z" fill="#0a0f05"/>
<path d="M529.00,197.00 L533.80,201.80 L533.80,207.70 L529.00,212.50Z M555.00,228.00 L550.20,223.20 L550.20,217.30 L555.00,212.50Z" fill="#c8f290" fill-opacity="0.4"/>
<path d="M529.00,197.00 L555.00,197.00 L550.20,201.80 L533.80,201.80Z M529.00,228.00 L555.00,228.00 L550.20,223.20 L533.80,223.20Z M529.00,228.00 L533.80,223.20 L533.80,217.30 L529.00,212.50Z M555.00,197.00 L550.20,201.80 L550.20,207.70 L555.00,212.50Z M529.30,212.50 L533.80,210.10 L550.20,210.10 L554.70,212.50 L550.20,214.90 L533.80,214.90Z" fill="#0a0f05"/>
<path d="M567.00,197.00 L593.00,197.00 L588.20,201.80 L571.80,201.80Z M567.00,228.00 L593.00,228.00 L588.20,223.20 L571.80,223.20Z M567.00,228.00 L571.80,223.20 L571.80,217.30 L567.00,212.50Z" fill="#c8f290" fill-opacity="0.4"/>
<path d="M567.00,197.00 L571.80,201.80 L571.80,207.70 L567.00,212.50Z M593.00,197.00 L588.20,201.80 L588.20,207.70 L593.00,212.50Z M593.00,228.00 L588.20,223.20 L588.20,217.30 L593.00,212.50Z M567.30,212.50 L571.80,210.10 L588.20,210.10 L592.70,212.50 L588.20,214.90 L571.80,214.90Z" fill="#0a0f05"/>
<path d="M606.00,228.00 L610.80,223.20 L610.80,217.30 L606.00,212.50Z M632.00,197.00 L627.20,201.80 L627.20,207.70 L632.00,212.50Z" fill="#c8f290" fill-opacity="0.4"/>
<path d="M606.00,197.00 L632.00,197.00 L627.20,201.80 L610.80,201.80Z M606.00,228.00 L632.00,228.00 L627.20,223.20 L610.80,223.20Z M606.00,197.00 L610.80,201.80 L610.80,207.70 L606.00,212.50Z M632.00,228.00 L627.20,223.20 L627.20,217.30 L632.00,212.50Z M606.30,212.50 L610.80,210.10 L627.20,210.10 L631.70,212.50 L627.20,214.90 L610.80,214.90Z" fill="#0a0f05"/>
<rect x="558.6" y="229.8" width="4.5" height="4.9" fill="#0a0f05" />
<rect x="480" y="245" width="161" height="55" fill="#c4c4c0" />
<rect x="480" y="245" width="160" height="54" fill="#ffffff" />
<polygon points="480,245 640,245 638,247 482,247 482,297 480,299" fill="#808080"/>
<rect x="482" y="247" width="157" height="51" fill="#f0f0e4" />
<rect x="482" y="247" width="156" height="1" fill="#a8a8a8" />
<rect x="482" y="247" width="1" height="50" fill="#a8a8a8" />
<defs><radialGradient id="g3" cx="0.45" cy="0" r="0.5" fx="0.45" fy="0" gradientTransform="translate(0.45 0) scale(1 1.6) translate(-0.45 0)"><stop offset="0" stop-color="#f0ffe0" stop-opacity="0.85"/><stop offset="0.35" stop-color="#d8f8a8" stop-opacity="0.35"/><stop offset="1" stop-color="#b0e468" stop-opacity="0"/></radialGradient></defs>
<rect x="483" y="248" width="155" height="49" fill="#afe266" />
<rect x="483" y="248" width="155" height="49" fill="url(#g3)" />
<rect x="483" y="248" width="155" height="4" fill="url(#shT)" />
<rect x="483" y="248" width="5" height="49" fill="url(#shL)" />
<rect x="483" y="293" width="155" height="4" fill="url(#shB)" />
<text x="439" y="279.5" font-size="11" fill="#000" font-weight="normal" text-anchor="start" textLength="27" lengthAdjust="spacingAndGlyphs" >Amps</text>
<path d="M490.00,256.00 L514.00,256.00 L509.70,260.30 L494.30,260.30Z M490.00,288.00 L514.00,288.00 L509.70,283.70 L494.30,283.70Z M490.00,256.00 L494.30,260.30 L494.30,267.70 L490.00,272.00Z M490.00,288.00 L494.30,283.70 L494.30,276.30 L490.00,272.00Z M490.30,272.00 L494.30,269.85 L509.70,269.85 L513.70,272.00 L509.70,274.15 L494.30,274.15Z" fill="#c8f290" fill-opacity="0.4"/>
<path d="M514.00,256.00 L509.70,260.30 L509.70,267.70 L514.00,272.00Z M514.00,288.00 L509.70,283.70 L509.70,276.30 L514.00,272.00Z" fill="#0a0f05"/>
<path d="M543.50,256.00 L539.20,260.30 L539.20,267.70 L543.50,272.00Z" fill="#c8f290" fill-opacity="0.4"/>
<path d="M519.50,256.00 L543.50,256.00 L539.20,260.30 L523.80,260.30Z M519.50,288.00 L543.50,288.00 L539.20,283.70 L523.80,283.70Z M519.50,256.00 L523.80,260.30 L523.80,267.70 L519.50,272.00Z M519.50,288.00 L523.80,283.70 L523.80,276.30 L519.50,272.00Z M543.50,288.00 L539.20,283.70 L539.20,276.30 L543.50,272.00Z M519.80,272.00 L523.80,269.85 L539.20,269.85 L543.20,272.00 L539.20,274.15 L523.80,274.15Z" fill="#0a0f05"/>
<path d="M549.00,256.00 L573.00,256.00 L568.70,260.30 L553.30,260.30Z M549.00,288.00 L573.00,288.00 L568.70,283.70 L553.30,283.70Z M549.00,288.00 L553.30,283.70 L553.30,276.30 L549.00,272.00Z" fill="#c8f290" fill-opacity="0.4"/>
<path d="M549.00,256.00 L553.30,260.30 L553.30,267.70 L549.00,272.00Z M573.00,256.00 L568.70,260.30 L568.70,267.70 L573.00,272.00Z M573.00,288.00 L568.70,283.70 L568.70,276.30 L573.00,272.00Z M549.30,272.00 L553.30,269.85 L568.70,269.85 L572.70,272.00 L568.70,274.15 L553.30,274.15Z" fill="#0a0f05"/>
<path d="M579.00,256.00 L583.30,260.30 L583.30,267.70 L579.00,272.00Z M603.00,288.00 L598.70,283.70 L598.70,276.30 L603.00,272.00Z" fill="#c8f290" fill-opacity="0.4"/>
<path d="M579.00,256.00 L603.00,256.00 L598.70,260.30 L583.30,260.30Z M579.00,288.00 L603.00,288.00 L598.70,283.70 L583.30,283.70Z M579.00,288.00 L583.30,283.70 L583.30,276.30 L579.00,272.00Z M603.00,256.00 L598.70,260.30 L598.70,267.70 L603.00,272.00Z M579.30,272.00 L583.30,269.85 L598.70,269.85 L602.70,272.00 L598.70,274.15 L583.30,274.15Z" fill="#0a0f05"/>
<path d="M633.00,256.00 L628.70,260.30 L628.70,267.70 L633.00,272.00Z" fill="#c8f290" fill-opacity="0.4"/>
<path d="M609.00,256.00 L633.00,256.00 L628.70,260.30 L613.30,260.30Z M609.00,288.00 L633.00,288.00 L628.70,283.70 L613.30,283.70Z M609.00,256.00 L613.30,260.30 L613.30,267.70 L609.00,272.00Z M609.00,288.00 L613.30,283.70 L613.30,276.30 L609.00,272.00Z M633.00,288.00 L628.70,283.70 L628.70,276.30 L633.00,272.00Z M609.30,272.00 L613.30,269.85 L628.70,269.85 L632.70,272.00 L628.70,274.15 L613.30,274.15Z" fill="#0a0f05"/>
<rect x="573.6" y="290" width="4.4" height="4.5" fill="#0a0f05" />
<rect x="480" y="303" width="161" height="56" fill="#c4c4c0" />
<rect x="480" y="303" width="160" height="55" fill="#ffffff" />
<polygon points="480,303 640,303 638,305 482,305 482,356 480,358" fill="#808080"/>
<rect x="482" y="305" width="157" height="52" fill="#f0f0e4" />
<rect x="482" y="305" width="156" height="1" fill="#a8a8a8" />
<rect x="482" y="305" width="1" height="51" fill="#a8a8a8" />
<defs><radialGradient id="g4" cx="0.45" cy="0" r="0.5" fx="0.45" fy="0" gradientTransform="translate(0.45 0) scale(1 1.6) translate(-0.45 0)"><stop offset="0" stop-color="#f0ffe0" stop-opacity="0.85"/><stop offset="0.35" stop-color="#d8f8a8" stop-opacity="0.35"/><stop offset="1" stop-color="#b0e468" stop-opacity="0"/></radialGradient></defs>
<rect x="483" y="306" width="155" height="50" fill="#afe266" />
<rect x="483" y="306" width="155" height="50" fill="url(#g4)" />
<rect x="483" y="306" width="155" height="4" fill="url(#shT)" />
<rect x="483" y="306" width="5" height="50" fill="url(#shL)" />
<rect x="483" y="352" width="155" height="4" fill="url(#shB)" />
<text x="439" y="343" font-size="11" fill="#000" font-weight="normal" text-anchor="start" textLength="23" lengthAdjust="spacingAndGlyphs" >mAH</text>
<path d="M492.00,313.50 L510.00,313.50 L505.70,317.80 L496.30,317.80Z M492.00,346.00 L510.00,346.00 L505.70,341.70 L496.30,341.70Z M492.00,313.50 L496.30,317.80 L496.30,325.45 L492.00,329.75Z M492.00,346.00 L496.30,341.70 L496.30,334.05 L492.00,329.75Z M510.00,313.50 L505.70,317.80 L505.70,325.45 L510.00,329.75Z M510.00,346.00 L505.70,341.70 L505.70,334.05 L510.00,329.75Z M492.30,329.75 L496.30,327.60 L505.70,327.60 L509.70,329.75 L505.70,331.90 L496.30,331.90Z" fill="#c8f290" fill-opacity="0.4"/>
<path d="M522.00,313.50 L540.00,313.50 L535.70,317.80 L526.30,317.80Z M522.00,346.00 L540.00,346.00 L535.70,341.70 L526.30,341.70Z M522.00,313.50 L526.30,317.80 L526.30,325.45 L522.00,329.75Z M522.00,346.00 L526.30,341.70 L526.30,334.05 L522.00,329.75Z M540.00,313.50 L535.70,317.80 L535.70,325.45 L540.00,329.75Z M540.00,346.00 L535.70,341.70 L535.70,334.05 L540.00,329.75Z M522.30,329.75 L526.30,327.60 L535.70,327.60 L539.70,329.75 L535.70,331.90 L526.30,331.90Z" fill="#c8f290" fill-opacity="0.4"/>
<path d="M552.00,313.50 L570.00,313.50 L565.70,317.80 L556.30,317.80Z M552.00,346.00 L570.00,346.00 L565.70,341.70 L556.30,341.70Z M552.00,313.50 L556.30,317.80 L556.30,325.45 L552.00,329.75Z M552.00,346.00 L556.30,341.70 L556.30,334.05 L552.00,329.75Z M570.00,313.50 L565.70,317.80 L565.70,325.45 L570.00,329.75Z M570.00,346.00 L565.70,341.70 L565.70,334.05 L570.00,329.75Z M552.30,329.75 L556.30,327.60 L565.70,327.60 L569.70,329.75 L565.70,331.90 L556.30,331.90Z" fill="#0a0f05"/>
<path d="M582.00,346.00 L586.30,341.70 L586.30,334.05 L582.00,329.75Z M600.00,313.50 L595.70,317.80 L595.70,325.45 L600.00,329.75Z" fill="#c8f290" fill-opacity="0.4"/>
<path d="M582.00,313.50 L600.00,313.50 L595.70,317.80 L586.30,317.80Z M582.00,346.00 L600.00,346.00 L595.70,341.70 L586.30,341.70Z M582.00,313.50 L586.30,317.80 L586.30,325.45 L582.00,329.75Z M600.00,346.00 L595.70,341.70 L595.70,334.05 L600.00,329.75Z M582.30,329.75 L586.30,327.60 L595.70,327.60 L599.70,329.75 L595.70,331.90 L586.30,331.90Z" fill="#0a0f05"/>
<path d="M612.00,313.50 L630.00,313.50 L625.70,317.80 L616.30,317.80Z M612.00,346.00 L630.00,346.00 L625.70,341.70 L616.30,341.70Z M612.00,313.50 L616.30,317.80 L616.30,325.45 L612.00,329.75Z M612.00,346.00 L616.30,341.70 L616.30,334.05 L612.00,329.75Z M630.00,313.50 L625.70,317.80 L625.70,325.45 L630.00,329.75Z M630.00,346.00 L625.70,341.70 L625.70,334.05 L630.00,329.75Z M612.30,329.75 L616.30,327.60 L625.70,327.60 L629.70,329.75 L625.70,331.90 L616.30,331.90Z" fill="#0a0f05"/>
<rect x="689" y="186" width="159" height="55" fill="#c4c4c0" />
<rect x="689" y="186" width="158" height="54" fill="#ffffff" />
<polygon points="689,186 847,186 845,188 691,188 691,238 689,240" fill="#808080"/>
<rect x="691" y="188" width="155" height="51" fill="#f0f0e4" />
<rect x="691" y="188" width="154" height="1" fill="#a8a8a8" />
<rect x="691" y="188" width="1" height="50" fill="#a8a8a8" />
<defs><radialGradient id="g5" cx="0.45" cy="0" r="0.5" fx="0.45" fy="0" gradientTransform="translate(0.45 0) scale(1 1.6) translate(-0.45 0)"><stop offset="0" stop-color="#f0ffe0" stop-opacity="0.85"/><stop offset="0.35" stop-color="#d8f8a8" stop-opacity="0.35"/><stop offset="1" stop-color="#b0e468" stop-opacity="0"/></radialGradient></defs>
<rect x="692" y="189" width="153" height="49" fill="#afe266" />
<rect x="692" y="189" width="153" height="49" fill="url(#g5)" />
<rect x="692" y="189" width="153" height="4" fill="url(#shT)" />
<rect x="692" y="189" width="5" height="49" fill="url(#shL)" />
<rect x="692" y="234" width="153" height="4" fill="url(#shB)" />
<text x="652.2" y="225.6" font-size="11" fill="#000" font-weight="normal" text-anchor="start" textLength="28" lengthAdjust="spacingAndGlyphs" >Watts</text>
<path d="M701.60,197.00 L706.10,201.50 L706.10,208.50 L701.60,213.00Z M726.60,229.00 L722.10,224.50 L722.10,217.50 L726.60,213.00Z" fill="#c8f290" fill-opacity="0.4"/>
<path d="M701.60,197.00 L726.60,197.00 L722.10,201.50 L706.10,201.50Z M701.60,229.00 L726.60,229.00 L722.10,224.50 L706.10,224.50Z M701.60,229.00 L706.10,224.50 L706.10,217.50 L701.60,213.00Z M726.60,197.00 L722.10,201.50 L722.10,208.50 L726.60,213.00Z M701.90,213.00 L706.10,210.75 L722.10,210.75 L726.30,213.00 L722.10,215.25 L706.10,215.25Z" fill="#0a0f05"/>
<path d="M739.30,213.00 L743.50,210.75 L759.50,210.75 L763.70,213.00 L759.50,215.25 L743.50,215.25Z" fill="#c8f290" fill-opacity="0.4"/>
<path d="M739.00,197.00 L764.00,197.00 L759.50,201.50 L743.50,201.50Z M739.00,229.00 L764.00,229.00 L759.50,224.50 L743.50,224.50Z M739.00,197.00 L743.50,201.50 L743.50,208.50 L739.00,213.00Z M739.00,229.00 L743.50,224.50 L743.50,217.50 L739.00,213.00Z M764.00,197.00 L759.50,201.50 L759.50,208.50 L764.00,213.00Z M764.00,229.00 L759.50,224.50 L759.50,217.50 L764.00,213.00Z" fill="#0a0f05"/>
<path d="M776.30,197.00 L801.30,197.00 L796.80,201.50 L780.80,201.50Z M776.30,229.00 L801.30,229.00 L796.80,224.50 L780.80,224.50Z M776.30,229.00 L780.80,224.50 L780.80,217.50 L776.30,213.00Z" fill="#c8f290" fill-opacity="0.4"/>
<path d="M776.30,197.00 L780.80,201.50 L780.80,208.50 L776.30,213.00Z M801.30,197.00 L796.80,201.50 L796.80,208.50 L801.30,213.00Z M801.30,229.00 L796.80,224.50 L796.80,217.50 L801.30,213.00Z M776.60,213.00 L780.80,210.75 L796.80,210.75 L801.00,213.00 L796.80,215.25 L780.80,215.25Z" fill="#0a0f05"/>
<path d="M813.60,229.00 L818.10,224.50 L818.10,217.50 L813.60,213.00Z M838.60,197.00 L834.10,201.50 L834.10,208.50 L838.60,213.00Z" fill="#c8f290" fill-opacity="0.4"/>
<path d="M813.60,197.00 L838.60,197.00 L834.10,201.50 L818.10,201.50Z M813.60,229.00 L838.60,229.00 L834.10,224.50 L818.10,224.50Z M813.60,197.00 L818.10,201.50 L818.10,208.50 L813.60,213.00Z M838.60,229.00 L834.10,224.50 L834.10,217.50 L838.60,213.00Z M813.90,213.00 L818.10,210.75 L834.10,210.75 L838.30,213.00 L834.10,215.25 L818.10,215.25Z" fill="#0a0f05"/>
<rect x="690" y="244" width="158" height="55" fill="#c4c4c0" />
<rect x="690" y="244" width="157" height="54" fill="#ffffff" />
<polygon points="690,244 847,244 845,246 692,246 692,296 690,298" fill="#808080"/>
<rect x="692" y="246" width="154" height="51" fill="#f0f0e4" />
<rect x="692" y="246" width="153" height="1" fill="#a8a8a8" />
<rect x="692" y="246" width="1" height="50" fill="#a8a8a8" />
<defs><radialGradient id="g6" cx="0.45" cy="0" r="0.5" fx="0.45" fy="0" gradientTransform="translate(0.45 0) scale(1 1.6) translate(-0.45 0)"><stop offset="0" stop-color="#f0ffe0" stop-opacity="0.85"/><stop offset="0.35" stop-color="#d8f8a8" stop-opacity="0.35"/><stop offset="1" stop-color="#b0e468" stop-opacity="0"/></radialGradient></defs>
<rect x="693" y="247" width="152" height="49" fill="#afe266" />
<rect x="693" y="247" width="152" height="49" fill="url(#g6)" />
<rect x="693" y="247" width="152" height="4" fill="url(#shT)" />
<rect x="693" y="247" width="5" height="49" fill="url(#shL)" />
<rect x="693" y="292" width="152" height="4" fill="url(#shB)" />
<text x="652.2" y="284" font-size="11" fill="#000" font-weight="normal" text-anchor="start" textLength="22" lengthAdjust="spacingAndGlyphs" >RPM</text>
<path d="M702.10,256.00 L706.40,260.30 L706.40,267.20 L702.10,271.50Z M702.10,287.00 L706.40,282.70 L706.40,275.80 L702.10,271.50Z" fill="#c8f290" fill-opacity="0.4"/>
<path d="M702.10,256.00 L724.80,256.00 L720.50,260.30 L706.40,260.30Z M702.10,287.00 L724.80,287.00 L720.50,282.70 L706.40,282.70Z M724.80,256.00 L720.50,260.30 L720.50,267.20 L724.80,271.50Z M724.80,287.00 L720.50,282.70 L720.50,275.80 L724.80,271.50Z M702.40,271.50 L706.40,269.35 L720.50,269.35 L724.50,271.50 L720.50,273.65 L706.40,273.65Z" fill="#0a0f05"/>
<path d="M731.10,271.50 L735.10,269.35 L749.20,269.35 L753.20,271.50 L749.20,273.65 L735.10,273.65Z" fill="#c8f290" fill-opacity="0.4"/>
<path d="M730.80,256.00 L753.50,256.00 L749.20,260.30 L735.10,260.30Z M730.80,287.00 L753.50,287.00 L749.20,282.70 L735.10,282.70Z M730.80,256.00 L735.10,260.30 L735.10,267.20 L730.80,271.50Z M730.80,287.00 L735.10,282.70 L735.10,275.80 L730.80,271.50Z M753.50,256.00 L749.20,260.30 L749.20,267.20 L753.50,271.50Z M753.50,287.00 L749.20,282.70 L749.20,275.80 L753.50,271.50Z" fill="#0a0f05"/>
<path d="M760.60,271.50 L764.60,269.35 L778.70,269.35 L782.70,271.50 L778.70,273.65 L764.60,273.65Z" fill="#c8f290" fill-opacity="0.4"/>
<path d="M760.30,256.00 L783.00,256.00 L778.70,260.30 L764.60,260.30Z M760.30,287.00 L783.00,287.00 L778.70,282.70 L764.60,282.70Z M760.30,256.00 L764.60,260.30 L764.60,267.20 L760.30,271.50Z M760.30,287.00 L764.60,282.70 L764.60,275.80 L760.30,271.50Z M783.00,256.00 L778.70,260.30 L778.70,267.20 L783.00,271.50Z M783.00,287.00 L778.70,282.70 L778.70,275.80 L783.00,271.50Z" fill="#0a0f05"/>
<path d="M789.30,271.50 L793.30,269.35 L807.40,269.35 L811.40,271.50 L807.40,273.65 L793.30,273.65Z" fill="#c8f290" fill-opacity="0.4"/>
<path d="M789.00,256.00 L811.70,256.00 L807.40,260.30 L793.30,260.30Z M789.00,287.00 L811.70,287.00 L807.40,282.70 L793.30,282.70Z M789.00,256.00 L793.30,260.30 L793.30,267.20 L789.00,271.50Z M789.00,287.00 L793.30,282.70 L793.30,275.80 L789.00,271.50Z M811.70,256.00 L807.40,260.30 L807.40,267.20 L811.70,271.50Z M811.70,287.00 L807.40,282.70 L807.40,275.80 L811.70,271.50Z" fill="#0a0f05"/>
<path d="M818.80,271.50 L822.80,269.35 L836.90,269.35 L840.90,271.50 L836.90,273.65 L822.80,273.65Z" fill="#c8f290" fill-opacity="0.4"/>
<path d="M818.50,256.00 L841.20,256.00 L836.90,260.30 L822.80,260.30Z M818.50,287.00 L841.20,287.00 L836.90,282.70 L822.80,282.70Z M818.50,256.00 L822.80,260.30 L822.80,267.20 L818.50,271.50Z M818.50,287.00 L822.80,282.70 L822.80,275.80 L818.50,271.50Z M841.20,256.00 L836.90,260.30 L836.90,267.20 L841.20,271.50Z M841.20,287.00 L836.90,282.70 L836.90,275.80 L841.20,271.50Z" fill="#0a0f05"/>
<rect x="690" y="303" width="158" height="56" fill="#c4c4c0" />
<rect x="690" y="303" width="157" height="55" fill="#ffffff" />
<polygon points="690,303 847,303 845,305 692,305 692,356 690,358" fill="#808080"/>
<rect x="692" y="305" width="154" height="52" fill="#f0f0e4" />
<rect x="692" y="305" width="153" height="1" fill="#a8a8a8" />
<rect x="692" y="305" width="1" height="51" fill="#a8a8a8" />
<defs><radialGradient id="g7" cx="0.45" cy="0" r="0.5" fx="0.45" fy="0" gradientTransform="translate(0.45 0) scale(1 1.6) translate(-0.45 0)"><stop offset="0" stop-color="#f0ffe0" stop-opacity="0.85"/><stop offset="0.35" stop-color="#d8f8a8" stop-opacity="0.35"/><stop offset="1" stop-color="#b0e468" stop-opacity="0"/></radialGradient></defs>
<rect x="693" y="306" width="152" height="50" fill="#afe266" />
<rect x="693" y="306" width="152" height="50" fill="url(#g7)" />
<rect x="693" y="306" width="152" height="4" fill="url(#shT)" />
<rect x="693" y="306" width="5" height="50" fill="url(#shL)" />
<rect x="693" y="352" width="152" height="4" fill="url(#shB)" />
<text x="652.2" y="343" font-size="11" fill="#000" font-weight="normal" text-anchor="start" textLength="27" lengthAdjust="spacingAndGlyphs" >TmpA</text>
<path d="M702.00,314.50 L727.00,314.50 L722.50,319.00 L706.50,319.00Z M702.00,345.00 L727.00,345.00 L722.50,340.50 L706.50,340.50Z M702.00,314.50 L706.50,319.00 L706.50,325.25 L702.00,329.75Z M702.00,345.00 L706.50,340.50 L706.50,334.25 L702.00,329.75Z M702.30,329.75 L706.50,327.50 L722.50,327.50 L726.70,329.75 L722.50,332.00 L706.50,332.00Z" fill="#c8f290" fill-opacity="0.4"/>
<path d="M727.00,314.50 L722.50,319.00 L722.50,325.25 L727.00,329.75Z M727.00,345.00 L722.50,340.50 L722.50,334.25 L727.00,329.75Z" fill="#0a0f05"/>
<path d="M739.00,329.75 L743.20,327.50 L759.20,327.50 L763.40,329.75 L759.20,332.00 L743.20,332.00Z" fill="#c8f290" fill-opacity="0.4"/>
<path d="M738.70,314.50 L763.70,314.50 L759.20,319.00 L743.20,319.00Z M738.70,345.00 L763.70,345.00 L759.20,340.50 L743.20,340.50Z M738.70,314.50 L743.20,319.00 L743.20,325.25 L738.70,329.75Z M738.70,345.00 L743.20,340.50 L743.20,334.25 L738.70,329.75Z M763.70,314.50 L759.20,319.00 L759.20,325.25 L763.70,329.75Z M763.70,345.00 L759.20,340.50 L759.20,334.25 L763.70,329.75Z" fill="#0a0f05"/>
<path d="M776.20,345.00 L780.70,340.50 L780.70,334.25 L776.20,329.75Z" fill="#c8f290" fill-opacity="0.4"/>
<path d="M776.20,314.50 L801.20,314.50 L796.70,319.00 L780.70,319.00Z M776.20,345.00 L801.20,345.00 L796.70,340.50 L780.70,340.50Z M776.20,314.50 L780.70,319.00 L780.70,325.25 L776.20,329.75Z M801.20,314.50 L796.70,319.00 L796.70,325.25 L801.20,329.75Z M801.20,345.00 L796.70,340.50 L796.70,334.25 L801.20,329.75Z M776.50,329.75 L780.70,327.50 L796.70,327.50 L800.90,329.75 L796.70,332.00 L780.70,332.00Z" fill="#0a0f05"/>
<path d="M813.80,314.50 L838.80,314.50 L834.30,319.00 L818.30,319.00Z M813.80,345.00 L838.80,345.00 L834.30,340.50 L818.30,340.50Z M813.80,345.00 L818.30,340.50 L818.30,334.25 L813.80,329.75Z" fill="#c8f290" fill-opacity="0.4"/>
<path d="M813.80,314.50 L818.30,319.00 L818.30,325.25 L813.80,329.75Z M838.80,314.50 L834.30,319.00 L834.30,325.25 L838.80,329.75Z M838.80,345.00 L834.30,340.50 L834.30,334.25 L838.80,329.75Z M814.10,329.75 L818.30,327.50 L834.30,327.50 L838.50,329.75 L834.30,332.00 L818.30,332.00Z" fill="#0a0f05"/>
<rect x="805.3" y="346.4" width="3.8" height="4.2" fill="#0a0f05" />
<rect x="59" y="385" width="160" height="56" fill="#c4c4c0" />
<rect x="59" y="385" width="159" height="55" fill="#ffffff" />
<polygon points="59,385 218,385 216,387 61,387 61,438 59,440" fill="#808080"/>
<rect x="61" y="387" width="156" height="52" fill="#f0f0e4" />
<rect x="61" y="387" width="155" height="1" fill="#a8a8a8" />
<rect x="61" y="387" width="1" height="51" fill="#a8a8a8" />
<defs><radialGradient id="g8" cx="0.45" cy="0" r="0.5" fx="0.45" fy="0" gradientTransform="translate(0.45 0) scale(1 1.6) translate(-0.45 0)"><stop offset="0" stop-color="#f0ffe0" stop-opacity="0.85"/><stop offset="0.35" stop-color="#d8f8a8" stop-opacity="0.35"/><stop offset="1" stop-color="#b0e468" stop-opacity="0"/></radialGradient></defs>
<rect x="62" y="388" width="154" height="50" fill="#afe266" />
<rect x="62" y="388" width="154" height="50" fill="url(#g8)" />
<rect x="62" y="388" width="154" height="4" fill="url(#shT)" />
<rect x="62" y="388" width="5" height="50" fill="url(#shL)" />
<rect x="62" y="434" width="154" height="4" fill="url(#shB)" />
<text x="22.7" y="426.6" font-size="11" fill="#000" font-weight="normal" text-anchor="start" textLength="17.5" lengthAdjust="spacingAndGlyphs" >Spd</text>
<path d="M71.00,396.20 L96.00,396.20 L91.70,400.50 L75.30,400.50Z M71.00,427.60 L96.00,427.60 L91.70,423.30 L75.30,423.30Z M71.00,396.20 L75.30,400.50 L75.30,407.60 L71.00,411.90Z M71.00,427.60 L75.30,423.30 L75.30,416.20 L71.00,411.90Z M96.00,396.20 L91.70,400.50 L91.70,407.60 L96.00,411.90Z M96.00,427.60 L91.70,423.30 L91.70,416.20 L96.00,411.90Z M71.30,411.90 L75.30,409.75 L91.70,409.75 L95.70,411.90 L91.70,414.05 L75.30,414.05Z" fill="#c8f290" fill-opacity="0.4"/>
<path d="M108.50,396.20 L133.50,396.20 L129.20,400.50 L112.80,400.50Z M108.50,427.60 L133.50,427.60 L129.20,423.30 L112.80,423.30Z M108.50,396.20 L112.80,400.50 L112.80,407.60 L108.50,411.90Z M108.50,427.60 L112.80,423.30 L112.80,416.20 L108.50,411.90Z M133.50,396.20 L129.20,400.50 L129.20,407.60 L133.50,411.90Z M133.50,427.60 L129.20,423.30 L129.20,416.20 L133.50,411.90Z M108.80,411.90 L112.80,409.75 L129.20,409.75 L133.20,411.90 L129.20,414.05 L112.80,414.05Z" fill="#c8f290" fill-opacity="0.4"/>
<path d="M146.00,396.20 L171.00,396.20 L166.70,400.50 L150.30,400.50Z M146.00,427.60 L171.00,427.60 L166.70,423.30 L150.30,423.30Z M146.00,396.20 L150.30,400.50 L150.30,407.60 L146.00,411.90Z M146.00,427.60 L150.30,423.30 L150.30,416.20 L146.00,411.90Z M171.00,396.20 L166.70,400.50 L166.70,407.60 L171.00,411.90Z M171.00,427.60 L166.70,423.30 L166.70,416.20 L171.00,411.90Z M146.30,411.90 L150.30,409.75 L166.70,409.75 L170.70,411.90 L166.70,414.05 L150.30,414.05Z" fill="#c8f290" fill-opacity="0.4"/>
<path d="M183.30,411.90 L187.30,409.75 L203.70,409.75 L207.70,411.90 L203.70,414.05 L187.30,414.05Z" fill="#c8f290" fill-opacity="0.4"/>
<path d="M183.00,396.20 L208.00,396.20 L203.70,400.50 L187.30,400.50Z M183.00,427.60 L208.00,427.60 L203.70,423.30 L187.30,423.30Z M183.00,396.20 L187.30,400.50 L187.30,407.60 L183.00,411.90Z M183.00,427.60 L187.30,423.30 L187.30,416.20 L183.00,411.90Z M208.00,396.20 L203.70,400.50 L203.70,407.60 L208.00,411.90Z M208.00,427.60 L203.70,423.30 L203.70,416.20 L208.00,411.90Z" fill="#0a0f05"/>
<text x="19.1" y="577.5" font-size="11" fill="#000" font-weight="normal" text-anchor="start" textLength="193" lengthAdjust="spacingAndGlyphs" >GPS Status:  No GPS Expander Detected</text>
<text x="15.9" y="592.9" font-size="11" fill="#000" font-weight="normal" text-anchor="start" textLength="167.5" lengthAdjust="spacingAndGlyphs" >http://www.eagletreesystems.com</text>
<text x="660.4" y="577.5" font-size="11" fill="#000" font-weight="normal" text-anchor="start" textLength="179.6" lengthAdjust="spacingAndGlyphs" >Units: ENGLISH (Feet, MPH, Fahren.)</text>
<text x="595.3" y="594.6" font-size="11" fill="#000" font-weight="normal" text-anchor="start" textLength="235.8" lengthAdjust="spacingAndGlyphs" >Copyright © 2003-2008 Eagle Tree Systems, LLC</text>
</g>
</svg></body></html>
